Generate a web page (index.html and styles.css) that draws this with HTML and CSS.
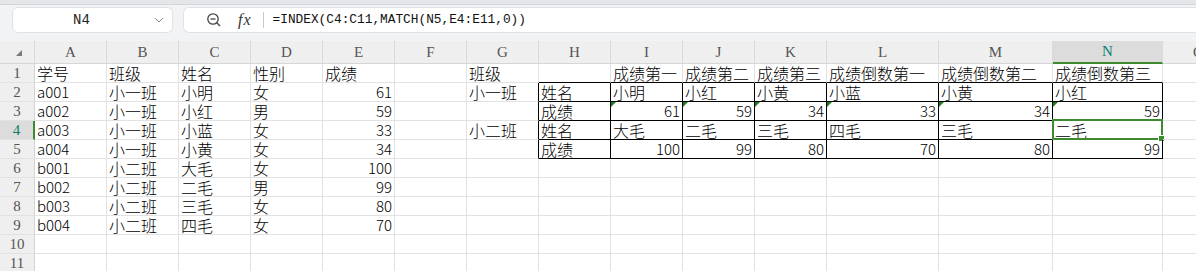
FILE: index.html
```html
<!DOCTYPE html>
<html lang="zh-CN">
<head>
<meta charset="utf-8">
<title>Sheet</title>
<link rel="stylesheet" href="styles.css">
</head>
<body>
<div class="app">
  <div class="topstrip"></div>
  <div class="toolbar">
    <div class="namebox">
      <span class="ref">N4</span>
      <svg class="chev" width="10" height="6" viewBox="0 0 10 6"><path d="M1 1 L5 5 L9 1" fill="none" stroke="#888" stroke-width="1"/></svg>
    </div>
    <div class="fbox">
      <svg class="zoomic" width="16" height="16" viewBox="0 0 16 16"><circle cx="7" cy="7" r="5.2" fill="none" stroke="#444" stroke-width="1.3"/><line x1="4.5" y1="7" x2="9.5" y2="7" stroke="#444" stroke-width="1.3"/><line x1="10.8" y1="10.8" x2="14" y2="14" stroke="#444" stroke-width="1.4"/></svg>
      <span class="fx">fx</span>
      <span class="sep"></span>
      <span class="formula">=INDEX(C4:C11,MATCH(N5,E4:E11,0))</span>
    </div>
  </div>
  <div class="sheet">
    <div class="ch corner"><span class="tri"></span></div>
    <div class="ch">A</div><div class="ch">B</div><div class="ch">C</div><div class="ch">D</div><div class="ch">E</div><div class="ch">F</div><div class="ch">G</div><div class="ch">H</div><div class="ch">I</div><div class="ch">J</div><div class="ch">K</div><div class="ch">L</div><div class="ch">M</div><div class="ch on">N</div><div class="ch">O</div>

    <div class="rh">1</div>
    <div>学号</div><div>班级</div><div>姓名</div><div>性别</div><div>成绩</div><div></div><div>班级</div><div class="tb"></div><div class="tb">成绩第一</div><div class="tb">成绩第二</div><div class="tb">成绩第三</div><div class="tb">成绩倒数第一</div><div class="tb">成绩倒数第二</div><div class="tb">成绩倒数第三</div><div></div>

    <div class="rh">2</div>
    <div class="en">a001</div><div>小一班</div><div>小明</div><div>女</div><div class="n">61</div><div></div><div class="lb">小一班</div><div class="bx">姓名</div><div class="bx">小明</div><div class="bx">小红</div><div class="bx">小黄</div><div class="bx">小蓝</div><div class="bx">小黄</div><div class="bx">小红</div><div></div>

    <div class="rh">3</div>
    <div class="en">a002</div><div>小一班</div><div>小红</div><div>男</div><div class="n">59</div><div></div><div class="lb"></div><div class="bx">成绩</div><div class="bx n m">61</div><div class="bx n m">59</div><div class="bx n m">34</div><div class="bx n m">33</div><div class="bx n m">34</div><div class="bx n m">59</div><div></div>

    <div class="rh on">4</div>
    <div class="en">a003</div><div>小一班</div><div>小蓝</div><div>女</div><div class="n">33</div><div></div><div class="lb">小二班</div><div class="bx">姓名</div><div class="bx">大毛</div><div class="bx">二毛</div><div class="bx">三毛</div><div class="bx">四毛</div><div class="bx">三毛</div><div class="bx cur">二毛<span class="sel"><span class="handle"></span></span></div><div></div>

    <div class="rh">5</div>
    <div class="en">a004</div><div>小一班</div><div>小黄</div><div>女</div><div class="n">34</div><div></div><div class="lb"></div><div class="bx">成绩</div><div class="bx n">100</div><div class="bx n">99</div><div class="bx n">80</div><div class="bx n">70</div><div class="bx n">80</div><div class="bx n">99</div><div></div>

    <div class="rh">6</div>
    <div class="en">b001</div><div>小二班</div><div>大毛</div><div>女</div><div class="n">100</div><div></div><div></div><div></div><div></div><div></div><div></div><div></div><div></div><div></div><div></div>

    <div class="rh">7</div>
    <div class="en">b002</div><div>小二班</div><div>二毛</div><div>男</div><div class="n">99</div><div></div><div></div><div></div><div></div><div></div><div></div><div></div><div></div><div></div><div></div>

    <div class="rh">8</div>
    <div class="en">b003</div><div>小二班</div><div>三毛</div><div>女</div><div class="n">80</div><div></div><div></div><div></div><div></div><div></div><div></div><div></div><div></div><div></div><div></div>

    <div class="rh">9</div>
    <div class="en">b004</div><div>小二班</div><div>四毛</div><div>女</div><div class="n">70</div><div></div><div></div><div></div><div></div><div></div><div></div><div></div><div></div><div></div><div></div>

    <div class="rh">10</div>
    <div></div><div></div><div></div><div></div><div></div><div></div><div></div><div></div><div></div><div></div><div></div><div></div><div></div><div></div><div></div>

    <div class="rh">11</div>
    <div></div><div></div><div></div><div></div><div></div><div></div><div></div><div></div><div></div><div></div><div></div><div></div><div></div><div></div><div></div>
  </div>
</div>
</body>
</html>
```

FILE: styles.css
```css
html, body {
  margin: 0;
  padding: 0;
  background: #ffffff;
  overflow: hidden;
}
.app {
  width: 1196px;
  height: 271px;
  overflow: hidden;
  background: #ffffff;
}
.topstrip {
  height: 4px;
  background: #e4e6ea;
  border-bottom: 1px solid #d3d6db;
}
.toolbar {
  height: 36px;
  box-sizing: border-box;
  background: #f2f3f5;
  display: flex;
  align-items: flex-start;
  padding: 2px 0 0 12px;
  gap: 10px;
}
.namebox {
  width: 161px;
  height: 26px;
  box-sizing: border-box;
  background: #fff;
  border: 1px solid #e1e2e5;
  border-radius: 6px;
  display: flex;
  align-items: center;
  position: relative;
}
.ref {
  flex: 1;
  text-align: center;
  font: 14px/24px "Liberation Mono", monospace;
  color: #222;
  padding-right: 4px;
}
.chev {
  margin-right: 8px;
}
.fbox {
  flex: 1;
  height: 26px;
  box-sizing: border-box;
  background: #fff;
  border: 1px solid #e1e2e5;
  border-right: none;
  border-radius: 6px 0 0 6px;
  display: flex;
  align-items: center;
  padding-left: 22px;
}
.zoomic {
  display: block;
}
.fx {
  font: italic 16px/24px "Liberation Serif", serif;
  color: #333;
  margin-left: 16px;
  letter-spacing: 1px;
}
.sep {
  width: 1px;
  height: 16px;
  background: #c8c8c8;
  margin-left: 11px;
}
.formula {
  font: 12.8px/24px "Liberation Mono", monospace;
  color: #111;
  margin-left: 9px;
}
.sheet {
  display: grid;
  grid-template-columns: 35px repeat(11, 72px) 112px 114px 110px 72px;
  grid-template-rows: 23px;
  grid-auto-rows: 19px;
  width: 1236px;
}
.sheet > div {
  box-sizing: border-box;
  border-right: 1px solid #e2e2e2;
  border-bottom: 1px solid #e2e2e2;
  padding: 0 2px;
  white-space: nowrap;
  font: 300 16px/18px "Noto Sans CJK SC", sans-serif;
  color: #000;
  position: relative;
}
.sheet > .ch {
  background: #efefef;
  border-right-color: #dadada;
  border-bottom-color: #d6d6d6;
  text-align: center;
  font: 15px/22px "Liberation Serif", serif;
  color: #555;
}
.sheet > .ch.on {
  background: #dcdcdc;
  color: #0f7c6a;
  border-bottom: 2px solid #3d8b2f;
  line-height: 21px;
}
.corner .tri {
  position: absolute;
  left: 16px;
  top: 9px;
  width: 0;
  height: 0;
  border-bottom: 6px solid #7a7a7a;
  border-left: 6px solid transparent;
}
.sheet > .rh {
  background: #efefef;
  border-right-color: #d4d4d4;
  text-align: center;
  font: 15px/18px "Liberation Serif", serif;
  color: #555;
  padding: 0;
}
.sheet > .rh.on {
  background: #dcdcdc;
  color: #0f7c6a;
  border-right: 2px solid #3d8b2f;
}
.sheet > .en {
  font: 300 15px/18px "Noto Sans CJK SC", sans-serif;
}
.sheet > .n {
  text-align: right;
  font: 300 15px/18px "Noto Sans CJK SC", sans-serif;
}
.sheet > .tb {
  border-bottom-color: #000;
}
.sheet > .lb {
  border-right-color: #000;
}
.sheet > .bx {
  border-right-color: #000;
  border-bottom-color: #000;
}
.sheet > .m::before {
  content: "";
  position: absolute;
  left: 0;
  top: 0;
  width: 0;
  height: 0;
  border-top: 5px solid #1e7a22;
  border-right: 5px solid transparent;
}
.sel {
  position: absolute;
  left: -1px;
  top: -2px;
  right: -1px;
  bottom: -1px;
  border: 2px solid #3d8b2f;
}
.handle {
  position: absolute;
  right: -4px;
  bottom: -4px;
  width: 5px;
  height: 5px;
  background: #3d8b2f;
  border: 1px solid #fff;
}
```
